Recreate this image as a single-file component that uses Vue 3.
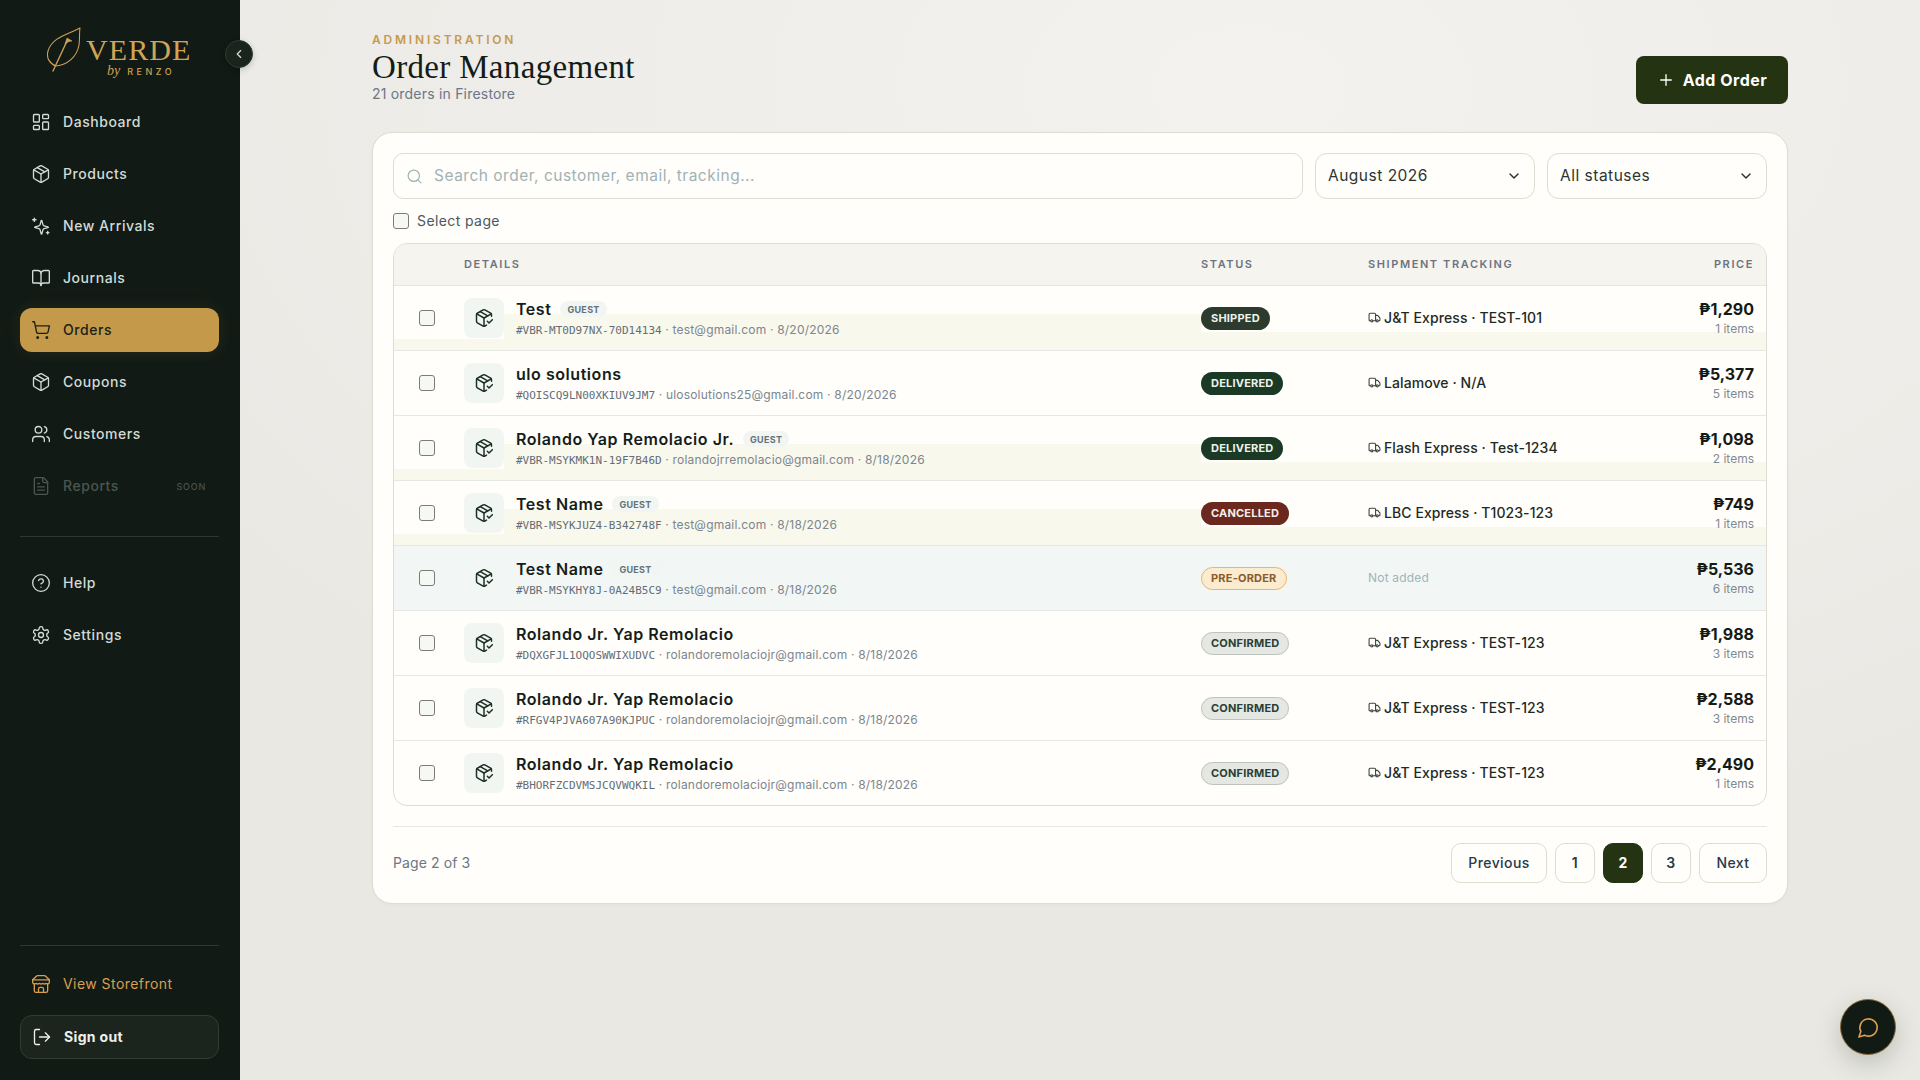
<script setup>
import { h } from 'vue'

const c = (x, y, r) => `M${x - r} ${y}a${r} ${r} 0 1 0 ${2 * r} 0a${r} ${r} 0 1 0 ${-2 * r} 0`
const r = (x, y, w, hh, q = 1) => `M${x + q} ${y}h${w - 2 * q}a${q} ${q} 0 0 1 ${q} ${q}v${hh - 2 * q}a${q} ${q} 0 0 1 ${-q} ${q}h${-(w - 2 * q)}a${q} ${q} 0 0 1 ${-q} ${-q}v${-(hh - 2 * q)}a${q} ${q} 0 0 1 ${q} ${-q}z`

const paths = {
  dashboard: [r(3, 3, 7, 9), r(14, 3, 7, 5), r(14, 12, 7, 9), r(3, 16, 7, 5)],
  box: ['M11 21.73a2 2 0 0 0 2 0l7-4A2 2 0 0 0 21 16V8a2 2 0 0 0-1-1.73l-7-4a2 2 0 0 0-2 0l-7 4A2 2 0 0 0 3 8v8a2 2 0 0 0 1 1.73z', 'M12 22V12', 'm3.3 7 8.7 5 8.7-5', 'm7.5 4.27 9 5.15'],
  sparkles: ['M10.9 16.6a2 2 0 0 0-1.4-1.4l-4.6-1.2a.5.5 0 0 1 0-1l4.6-1.2a2 2 0 0 0 1.4-1.4l1.2-4.6a.5.5 0 0 1 1 0l1.2 4.6a2 2 0 0 0 1.4 1.4l4.6 1.2a.5.5 0 0 1 0 1l-4.6 1.2a2 2 0 0 0-1.4 1.4l-1.2 4.6a.5.5 0 0 1-1 0z', 'M4 2.5v4', 'M6 4.5H2', 'M20 18.5v3', 'M21.5 20h-3'],
  book: ['M12 7v14', 'M3 18a1 1 0 0 1-1-1V4a1 1 0 0 1 1-1h5a4 4 0 0 1 4 4 4 4 0 0 1 4-4h5a1 1 0 0 1 1 1v13a1 1 0 0 1-1 1h-6a3 3 0 0 0-3 3 3 3 0 0 0-3-3z'],
  cart: [c(8, 21, 1), c(19, 21, 1), 'M2.05 2.05h2l2.66 12.42a2 2 0 0 0 2 1.58h9.78a2 2 0 0 0 1.95-1.57l1.65-7.43H5.12'],
  users: ['M16 21v-2a4 4 0 0 0-4-4H6a4 4 0 0 0-4 4v2', c(9, 7, 4), 'M22 21v-2a4 4 0 0 0-3-3.87', 'M16 3.13a4 4 0 0 1 0 7.75'],
  file: ['M15 2H6a2 2 0 0 0-2 2v16a2 2 0 0 0 2 2h12a2 2 0 0 0 2-2V7Z', 'M14 2v4a2 2 0 0 0 2 2h4', 'M10 9H8', 'M16 13H8', 'M16 17H8'],
  help: [c(12, 12, 10), 'M9.09 9a3 3 0 0 1 5.83 1c0 2-3 3-3 3', 'M12 17h.01'],
  settings: ['M12.22 2h-.44a2 2 0 0 0-2 2v.18a2 2 0 0 1-1 1.73l-.43.25a2 2 0 0 1-2 0l-.15-.08a2 2 0 0 0-2.73.73l-.22.38a2 2 0 0 0 .73 2.73l.15.1a2 2 0 0 1 1 1.72v.51a2 2 0 0 1-1 1.74l-.15.09a2 2 0 0 0-.73 2.73l.22.38a2 2 0 0 0 2.73.73l.15-.08a2 2 0 0 1 2 0l.43.25a2 2 0 0 1 1 1.73V20a2 2 0 0 0 2 2h.44a2 2 0 0 0 2-2v-.18a2 2 0 0 1 1-1.73l.43-.25a2 2 0 0 1 2 0l.15.08a2 2 0 0 0 2.73-.73l.22-.39a2 2 0 0 0-.73-2.73l-.15-.08a2 2 0 0 1-1-1.74v-.5a2 2 0 0 1 1-1.74l.15-.09a2 2 0 0 0 .73-2.73l-.22-.38a2 2 0 0 0-2.73-.73l-.15.08a2 2 0 0 1-2 0l-.43-.25a2 2 0 0 1-1-1.73V4a2 2 0 0 0-2-2z', c(12, 12, 3)],
  store: ['m2 7 4.41-4.41A2 2 0 0 1 7.83 2h8.34a2 2 0 0 1 1.42.59L22 7', 'M4 12v8a2 2 0 0 0 2 2h12a2 2 0 0 0 2-2v-8', 'M15 22v-4a2 2 0 0 0-2-2h-2a2 2 0 0 0-2 2v4', 'M2 7h20', 'M22 7v3a2 2 0 0 1-2 2a2.7 2.7 0 0 1-1.59-.63.7.7 0 0 0-.82 0A2.7 2.7 0 0 1 16 12a2.7 2.7 0 0 1-1.59-.63.7.7 0 0 0-.82 0A2.7 2.7 0 0 1 12 12a2.7 2.7 0 0 1-1.59-.63.7.7 0 0 0-.82 0A2.7 2.7 0 0 1 8 12a2.7 2.7 0 0 1-1.59-.63.7.7 0 0 0-.82 0A2.7 2.7 0 0 1 4 12a2 2 0 0 1-2-2V7'],
  logout: ['M9 3H5a2 2 0 0 0-2 2v14a2 2 0 0 0 2 2h4', 'm16 17 5-5-5-5', 'M21 12H9'],
  chevronLeft: ['m15 18-6-6 6-6'],
  chevronDown: ['m6 9 6 6 6-6'],
  search: [c(11, 11, 8), 'm21 21-4.3-4.3'],
  plus: ['M5 12h14', 'M12 5v14'],
  packageCheck: ['m16 16 2 2 4-4', 'M21 10V8a2 2 0 0 0-1-1.73l-7-4a2 2 0 0 0-2 0l-7 4A2 2 0 0 0 3 8v8a2 2 0 0 0 1 1.73l7 4a2 2 0 0 0 2 0l2-1.14', 'm7.5 4.27 9 5.15', 'M3.29 7 12 12l8.71-5', 'M12 22V12'],
  truck: ['M14 18V6a2 2 0 0 0-2-2H4a2 2 0 0 0-2 2v11a1 1 0 0 0 1 1h2', 'M15 18H9', 'M19 18h2a1 1 0 0 0 1-1v-3.65a1 1 0 0 0-.22-.624l-3.48-4.35A1 1 0 0 0 17.52 8H14', c(17, 18, 2), c(7, 18, 2)],
  chat: ['M7.9 20A9 9 0 1 0 4 16.1L2 22Z']
}

const Icon = (props) =>
  h('svg', { width: props.size || 20, height: props.size || 20, viewBox: '0 0 24 24', fill: 'none', stroke: 'currentColor', 'stroke-width': props.sw || 2, 'stroke-linecap': 'round', 'stroke-linejoin': 'round', style: 'flex:none;display:block' },
    paths[props.name].map((d) => h('path', { d })))
Icon.props = ['name', 'size', 'sw']

const navTop = [
  { label: 'Dashboard', icon: 'dashboard' },
  { label: 'Products', icon: 'box' },
  { label: 'New Arrivals', icon: 'sparkles' },
  { label: 'Journals', icon: 'book' },
  { label: 'Orders', icon: 'cart', active: true },
  { label: 'Coupons', icon: 'box' },
  { label: 'Customers', icon: 'users' },
  { label: 'Reports', icon: 'file', dim: true, soon: true }
]
const navHelp = [
  { label: 'Help', icon: 'help' },
  { label: 'Settings', icon: 'settings' }
]

const orders = [
  { name: 'Test', guest: true, id: '#VBR-MT0D97NX-70D14134', email: 'test@gmail.com', date: '8/20/2026', status: 'shipped', track: 'J&T Express · TEST-101', price: '₱1,290', items: '1 items', band: true },
  { name: 'ulo solutions', id: '#QOISCQ9LN00XKIUV9JM7', email: 'ulosolutions25@gmail.com', date: '8/20/2026', status: 'delivered', track: 'Lalamove · N/A', price: '₱5,377', items: '5 items' },
  { name: 'Rolando Yap Remolacio Jr.', guest: true, id: '#VBR-MSYKMK1N-19F7B46D', email: 'rolandojrremolacio@gmail.com', date: '8/18/2026', status: 'delivered', track: 'Flash Express · Test-1234', price: '₱1,098', items: '2 items', band: true },
  { name: 'Test Name', guest: true, id: '#VBR-MSYKJUZ4-B342748F', email: 'test@gmail.com', date: '8/18/2026', status: 'cancelled', track: 'LBC Express · T1023-123', price: '₱749', items: '1 items', band: true },
  { name: 'Test Name', guest: true, id: '#VBR-MSYKHY8J-0A24B5C9', email: 'test@gmail.com', date: '8/18/2026', status: 'pre-order', track: '', price: '₱5,536', items: '6 items', hot: true },
  { name: 'Rolando Jr. Yap Remolacio', id: '#DQXGFJL1OQOSWWIXUDVC', email: 'rolandoremolaciojr@gmail.com', date: '8/18/2026', status: 'confirmed', track: 'J&T Express · TEST-123', price: '₱1,988', items: '3 items' },
  { name: 'Rolando Jr. Yap Remolacio', id: '#RFGV4PJVA607A90KJPUC', email: 'rolandoremolaciojr@gmail.com', date: '8/18/2026', status: 'confirmed', track: 'J&T Express · TEST-123', price: '₱2,588', items: '3 items' },
  { name: 'Rolando Jr. Yap Remolacio', id: '#BHORFZCDVMSJCQVWQKIL', email: 'rolandoremolaciojr@gmail.com', date: '8/18/2026', status: 'confirmed', track: 'J&T Express · TEST-123', price: '₱2,490', items: '1 items' }
]
</script>

<template>
  <div class="app">
    <aside class="side">
      <div class="logo">
        <svg class="leaf" width="38" height="46" viewBox="0 0 38 46" fill="none" stroke="#cf9f52" stroke-width="1.1" stroke-linecap="round" stroke-linejoin="round">
          <path d="M33 1C22 7 5 10 1 24C-1 31 3 37 9 39C20 38 30 30 32 18C33 12 32 6 33 1Z" />
          <path d="M6 44L20 14" stroke-width="1.4" />
          <path d="M18 17L20 11L25 14L22 14.5Z" fill="#cf9f52" stroke-width="0.6" />
        </svg>
        <div class="wordmark">
          <div class="verde">VERDE</div>
          <div class="by"><i>by</i><span>RENZO</span></div>
        </div>
      </div>
      <button class="collapse"><Icon name="chevronLeft" :size="14" /></button>

      <nav class="nav">
        <div v-for="n in navTop" :key="n.label" class="item" :class="{ active: n.active, dim: n.dim }">
          <Icon :name="n.icon" :sw="1.6" />
          <span class="label">{{ n.label }}</span>
          <span v-if="n.soon" class="soon">SOON</span>
        </div>
      </nav>
      <div class="rule rule-mid"></div>
      <nav class="nav">
        <div v-for="n in navHelp" :key="n.label" class="item">
          <Icon :name="n.icon" :sw="1.6" />
          <span class="label">{{ n.label }}</span>
        </div>
      </nav>

      <div class="side-foot">
        <div class="rule"></div>
        <div class="item store"><Icon name="store" :sw="1.6" /><span class="label">View Storefront</span></div>
        <div class="item signout"><Icon name="logout" :sw="1.6" /><span class="label">Sign out</span></div>
      </div>
    </aside>

    <main class="main">
      <header class="head">
        <div class="head-text">
          <div class="eyebrow">ADMINISTRATION</div>
          <h1 class="title">Order Management</h1>
          <div class="sub">21 orders in Firestore</div>
        </div>
        <button class="add"><Icon name="plus" :size="18" :sw="1.8" /><span>Add Order</span></button>
      </header>

      <section class="card">
        <div class="tools">
          <label class="search">
            <Icon name="search" :size="17" :sw="1.7" />
            <input type="text" placeholder="Search order, customer, email, tracking..." />
          </label>
          <div class="select"><span>August 2026</span><Icon name="chevronDown" :size="16" :sw="2.2" /></div>
          <div class="select"><span>All statuses</span><Icon name="chevronDown" :size="16" :sw="2.2" /></div>
        </div>
        <div class="select-page"><span class="check"></span><span>Select page</span></div>

        <div class="table">
          <div class="grid thead">
            <span></span>
            <span>DETAILS</span>
            <span>STATUS</span>
            <span>SHIPMENT TRACKING</span>
            <span class="right">PRICE</span>
          </div>
          <div v-for="o in orders" :key="o.id" class="grid row" :class="{ band: o.band, hot: o.hot }">
            <span class="check-cell"><span class="check"></span></span>
            <div class="details">
              <span class="pkg"><Icon name="packageCheck" :size="20" :sw="1.8" /></span>
              <div class="who">
                <div class="name-line">
                  <span class="name">{{ o.name }}</span>
                  <span v-if="o.guest" class="guest">GUEST</span>
                </div>
                <div class="meta"><span class="mono">{{ o.id }}</span> · {{ o.email }} · {{ o.date }}</div>
              </div>
            </div>
            <div><span class="badge" :class="o.status">{{ o.status.toUpperCase() }}</span></div>
            <div v-if="o.track" class="track"><Icon name="truck" :size="13" :sw="2" /><span>{{ o.track }}</span></div>
            <div v-else class="none">Not added</div>
            <div class="price">
              <div class="amount">{{ o.price }}</div>
              <div class="count">{{ o.items }}</div>
            </div>
          </div>
        </div>

        <footer class="pager">
          <span class="page-of">Page 2 of 3</span>
          <div class="pages">
            <button class="pg wide">Previous</button>
            <button class="pg num">1</button>
            <button class="pg num on">2</button>
            <button class="pg num">3</button>
            <button class="pg next">Next</button>
          </div>
        </footer>
      </section>
    </main>

    <button class="chat"><Icon name="chat" :size="23" :sw="1.7" /></button>
  </div>
</template>

<style>
body { margin: 0; }
</style>

<style scoped>
* { box-sizing: border-box; }
.app {
  position: relative;
  display: flex;
  height: 1080px;
  overflow: hidden;
  font-family: Inter, "Noto Sans", sans-serif;
  background: radial-gradient(ellipse 1300px 800px at 65% 8%, #f3f2ee 0%, #eeede9 55%, #e9e8e3 100%);
  color: #1c2520;
}
button { font-family: inherit; cursor: pointer; }

/* sidebar */
.side {
  position: relative;
  width: 240px;
  flex: none;
  display: flex;
  flex-direction: column;
  padding: 0 21px 21px 20px;
  background: #111a15;
}
.logo {
  height: 100px;
  display: flex;
  align-items: flex-start;
  gap: 1px;
  padding: 27px 0 0 27px;
}
.leaf { flex: none; }
.wordmark { padding-top: 10px; color: #cf9f52; }
.verde {
  font: 400 30px/26px "Liberation Serif", serif;
  letter-spacing: 1.1px;
  color: #d3a458;
}
.by {
  display: flex;
  align-items: center;
  gap: 7px;
  padding-left: 21px;
  height: 14px;
  margin-top: 1px;
}
.by i { font: italic 14px/14px "Liberation Serif", serif; }
.by span { font-size: 9px; letter-spacing: 3.5px; font-weight: 500; }
.collapse {
  position: absolute;
  top: 40px;
  left: 225px;
  width: 28px;
  height: 28px;
  display: flex;
  align-items: center;
  justify-content: center;
  padding: 0;
  border-radius: 50%;
  border: 1px solid #2c3b31;
  background: #19241d;
  color: #d9dcd6;
  box-shadow: 0 2px 6px rgba(0, 0, 0, 0.18);
}
.nav { display: flex; flex-direction: column; gap: 8px; }
.item {
  height: 44px;
  display: flex;
  align-items: center;
  gap: 12px;
  padding: 0 13px 0 11px;
  border-radius: 12px;
  font-size: 14px;
  font-weight: 500;
  letter-spacing: 0.55px;
  color: #d3dbd5;
}
.label { padding-bottom: 1px; }
.item.active {
  background: #c49a4a;
  color: #1b1f15;
  box-shadow: 0 0 16px rgba(196, 154, 74, 0.12);
}
.item.dim { color: #4a5650; }
.soon {
  margin-left: auto;
  font-size: 9px;
  letter-spacing: 0.8px;
  color: #46524d;
}
.rule { height: 1px; background: #2b3a2e; }
.rule-mid { margin: 28px 0 24px; }
.side-foot { margin-top: auto; display: flex; flex-direction: column; }
.store { margin-top: 16px; color: #d89f50; font-weight: 400; letter-spacing: 0.45px; }
.signout {
  margin-top: 9px;
  background: #1c251d;
  border: 1px solid #2f3e33;
  color: #eef0ec;
  font-weight: 700;
  letter-spacing: 0.35px;
}

/* main */
.main { flex: 1; min-width: 0; padding: 33px 132px 0; }
.head {
  height: 71px;
  display: flex;
  justify-content: space-between;
  align-items: flex-end;
  margin-bottom: 28px;
}
.head-text { align-self: flex-start; }
.eyebrow {
  font-size: 12px;
  line-height: 14px;
  font-weight: 600;
  letter-spacing: 2.8px;
  color: #c79a4d;
}
.title {
  margin: 0;
  font: 400 33px/40px "Liberation Serif", serif;
  letter-spacing: 0.33px;
  color: #141c18;
}
.sub {
  font-size: 14px;
  line-height: 14px;
  letter-spacing: 0.2px;
  color: #6b7686;
}
.add {
  width: 152px;
  height: 48px;
  display: flex;
  align-items: center;
  justify-content: center;
  gap: 8px;
  border: 0;
  border-radius: 8px;
  background: #243312;
  color: #fff;
  font-size: 16px;
  font-weight: 700;
  letter-spacing: 0.5px;
}

.card {
  border: 1px solid #e0dcd2;
  border-radius: 20px;
  background: #fffefa;
  padding: 20px 20px 20px;
  box-shadow: 0 1px 3px rgba(60, 55, 40, 0.03);
}
.tools { display: flex; gap: 12px; }
.search {
  flex: 1;
  height: 46px;
  display: flex;
  align-items: center;
  gap: 11px;
  padding: 0 12px;
  border: 1px solid #e0dcd2;
  border-radius: 10px;
  color: #9fb2b6;
}
.search input {
  flex: 1;
  border: 0;
  outline: 0;
  background: transparent;
  padding: 0 0 1px;
  font: 400 15.5px Inter, sans-serif;
  letter-spacing: 0.5px;
  color: #1c2520;
}
.search input::placeholder { color: #9fb2b6; opacity: 1; }
.select {
  width: 220px;
  height: 46px;
  display: flex;
  align-items: center;
  justify-content: space-between;
  padding: 0 12px;
  border: 1px solid #e0dcd2;
  border-radius: 12px;
  font-size: 15.5px;
  letter-spacing: 0.5px;
  color: #2a3530;
}
.select span { padding-bottom: 1px; }
.select-page {
  height: 20px;
  margin: 12px 0;
  display: flex;
  align-items: center;
  gap: 8px;
  font-size: 14px;
  letter-spacing: 0.4px;
  color: #4c5761;
}
.select-page span:last-child { padding-bottom: 2px; }
.check {
  display: block;
  width: 16px;
  height: 16px;
  border: 1.5px solid #7d7b78;
  border-radius: 3px;
  background: #f6f9f3;
}

.table {
  border: 1px solid #e0dcd2;
  border-radius: 14px;
  overflow: hidden;
}
.grid {
  display: grid;
  grid-template-columns: 70px 737px 167px 1fr 150px;
  padding-right: 12px;
  align-items: center;
}
.thead {
  height: 41px;
  padding-bottom: 2px;
  background: #f6f4ee;
  font-size: 11px;
  font-weight: 600;
  letter-spacing: 1.6px;
  color: #6b7483;
}
.right { text-align: right; }
.row {
  height: 65px;
  border-top: 1px solid #e6e8e6;
}
.thead + .row { border-top-color: #e6e6e0; }
.row.band {
  background:
    linear-gradient(#f9f8ec, #f9f8ec) 110px 28px / 697px 36px no-repeat,
    linear-gradient(#f9f8ec, #f9f8ec) 807px 46px / 100% 18px no-repeat,
    linear-gradient(#f9f8ec, #f9f8ec) 0 53px / 100% 11px no-repeat;
}
.row.hot { background: #f2f7f5; }
.check-cell { padding-left: 25px; }
.details { display: flex; align-items: center; gap: 12px; min-width: 0; }
.pkg {
  width: 40px;
  height: 40px;
  flex: none;
  display: flex;
  align-items: center;
  justify-content: center;
  border-radius: 8px;
  background: #f1f6f3;
  color: #1d3024;
}
.hot .pkg { background: #f2f7f5; }
.who { padding-top: 2px; }
.name-line { display: flex; align-items: center; gap: 10px; height: 20px; }
.name {
  font-size: 16px;
  font-weight: 600;
  letter-spacing: 0.55px;
  color: #151d18;
}
.guest {
  height: 16px;
  padding: 0 7px;
  margin-left: -1px;
  display: flex;
  align-items: center;
  border-radius: 8px;
  background: #f1f6f3;
  font-size: 9px;
  font-weight: 700;
  letter-spacing: 0.3px;
  color: #66717b;
}
.meta {
  margin-top: 3px;
  font-size: 12px;
  line-height: 16px;
  letter-spacing: 0.2px;
  color: #7b8690;
  white-space: nowrap;
}
.mono { font-family: "DejaVu Sans Mono", monospace; font-size: 11px; letter-spacing: 0; color: #636d78; }
.badge {
  display: inline-flex;
  align-items: center;
  height: 23px;
  padding: 0 9px;
  border-radius: 12px;
  border: 1px solid transparent;
  font-size: 11px;
  font-weight: 700;
  letter-spacing: 0.2px;
}
.shipped { background: #2c3b2e; color: #eef1ea; }
.delivered { background: #1a3a26; color: #eef1ea; }
.cancelled { background: #6a281e; color: #f7eee9; }
.pre-order { background: #fbecd0; border-color: #eeb366; color: #8b5a2b; }
.confirmed { background: #e5e7e3; border-color: #bdc2bc; color: #2a3f36; }
.track {
  display: flex;
  align-items: center;
  gap: 3px;
  padding-bottom: 2px;
  font-size: 14px;
  font-weight: 500;
  letter-spacing: 0.08px;
  color: #1f2a25;
}
.track svg { color: #3a4540; }
.none { font-size: 12px; letter-spacing: 0.2px; padding-bottom: 1px; color: #a3b4b4; }
.price { text-align: right; }
.amount { font-size: 16px; line-height: 20px; font-weight: 700; color: #141b17; }
.count { margin-top: 2px; font-size: 12px; line-height: 16px; color: #7f8a92; }

.pager {
  margin-top: 20px;
  padding-top: 16px;
  border-top: 1px solid #e6e8e6;
  display: flex;
  align-items: center;
  justify-content: space-between;
}
.page-of { font-size: 14px; letter-spacing: 0.1px; padding-bottom: 1px; color: #6b7686; }
.pages { display: flex; gap: 8px; }
.pg {
  height: 40px;
  padding: 0 0 1px;
  border: 1px solid #e0dcd2;
  border-radius: 10px;
  background: #fffefa;
  font-size: 14px;
  font-weight: 500;
  letter-spacing: 0.4px;
  color: #27394a;
}
.wide { width: 96px; }
.num { width: 40px; font-weight: 600; }
.next { width: 68px; }
.on { background: #243312; border-color: #243312; color: #fff; font-weight: 700; }

.chat {
  position: absolute;
  right: 24px;
  bottom: 25px;
  width: 56px;
  height: 56px;
  display: flex;
  align-items: center;
  justify-content: center;
  padding: 0;
  border-radius: 50%;
  border: 1px solid #8a6c3c;
  background: #111a15;
  color: #d9a04f;
  box-shadow: 0 8px 24px rgba(80, 90, 70, 0.28);
}
</style>
